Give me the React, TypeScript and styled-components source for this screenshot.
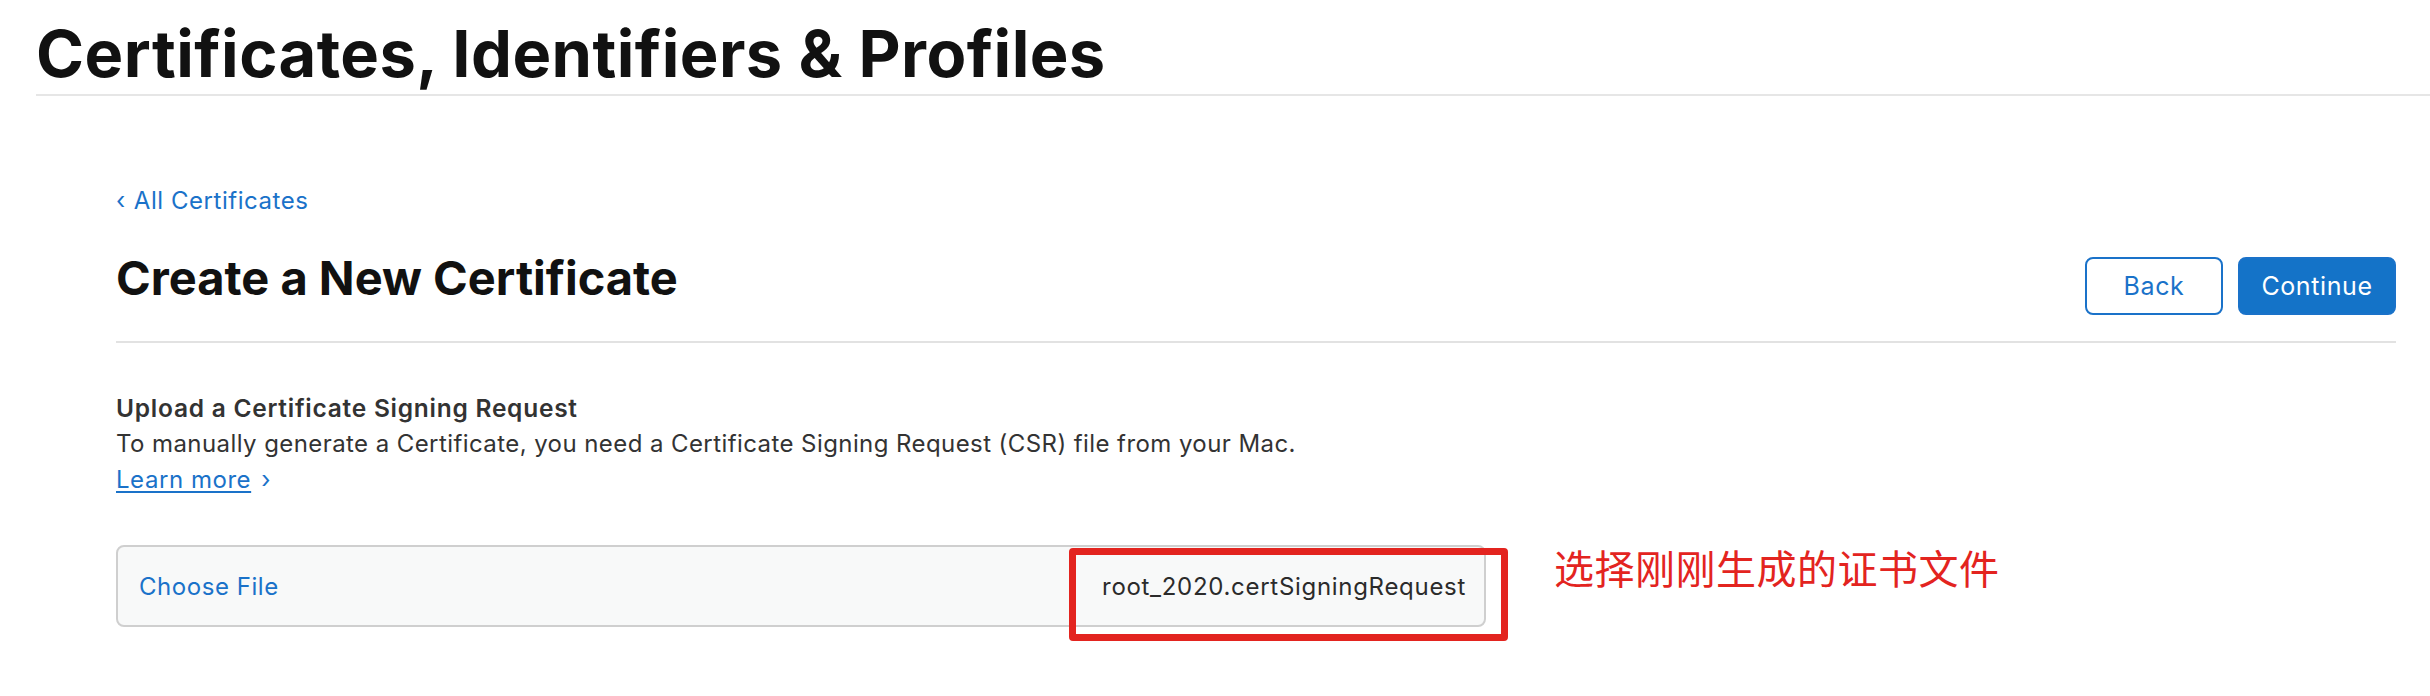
import React from "react";
import styled, { createGlobalStyle } from "styled-components";

const GlobalStyle = createGlobalStyle`
  html, body {
    margin: 0;
    padding: 0;
    background: #ffffff;
  }
  body {
    font-family: Inter, "Liberation Sans", "Noto Sans CJK SC", sans-serif;
    color: #111111;
  }
  * { box-sizing: border-box; }
`;

const Page = styled.div`
  width: 2430px;
  min-height: 696px;
  display: flex;
  flex-direction: column;
`;

const Header = styled.header`
  margin-left: 36px;
  padding-top: 21px;
  padding-bottom: 8px;
  border-bottom: 2px solid #e6e6e6;
`;

const SiteTitle = styled.h1`
  margin: 0;
  font-size: 65px;
  line-height: 65px;
  font-weight: 700;
  letter-spacing: 0.45px;
  color: #111111;
`;

const Main = styled.main`
  margin: 0 34px 0 116px;
  padding-top: 93px;
  display: flex;
  flex-direction: column;
`;

const BackLink = styled.a`
  font-size: 24px;
  line-height: 23px;
  letter-spacing: 0.55px;
  color: #1a72c9;
  text-decoration: none;
  display: flex;
  align-items: center;
  gap: 8px;
`;

const TitleRow = styled.div`
  margin-top: 42px;
  padding-bottom: 26px;
  border-bottom: 2px solid #e2e2e2;
  display: flex;
  justify-content: space-between;
  align-items: flex-start;
`;

const PageTitle = styled.h2`
  margin: 0;
  font-size: 47px;
  line-height: 47px;
  font-weight: 700;
  color: #111111;
`;

const Actions = styled.div`
  margin-top: 3px;
  display: flex;
  gap: 15px;
`;

const Button = styled.button<{ $primary?: boolean }>`
  height: 58px;
  padding: 0;
  width: ${(p) => (p.$primary ? "158px" : "138px")};
  border-radius: 8px;
  border: 2px solid #1a72c9;
  background: ${(p) => (p.$primary ? "#1473c8" : "#ffffff")};
  color: ${(p) => (p.$primary ? "#ffffff" : "#1a72c9")};
  font-family: Inter, "Liberation Sans", sans-serif;
  font-size: 25px;
  letter-spacing: 0.6px;
  font-weight: 400;
`;

const Section = styled.section`
  margin-top: 47px;
  display: flex;
  flex-direction: column;
  letter-spacing: 0.55px;
`;

const SectionTitle = styled.h3`
  margin: 0;
  font-size: 24.5px;
  line-height: 36px;
  font-weight: 600;
  letter-spacing: 0.75px;
  color: #333333;
`;

const Text = styled.p`
  margin: 0;
  font-size: 24px;
  line-height: 36px;
  letter-spacing: 0.42px;
  color: #333333;
`;

const LearnLine = styled.div`
  font-size: 24px;
  line-height: 36px;
  color: #1a72c9;
  display: flex;
  gap: 10px;
`;

const LearnMore = styled.a`
  color: #1a72c9;
  text-decoration: underline;
  text-decoration-thickness: 2px;
  text-underline-offset: 3px;
`;

const UploadRow = styled.div`
  margin-top: 47px;
  display: flex;
  align-items: flex-start;
`;

const FileField = styled.div`
  position: relative;
  width: 1370px;
  height: 82px;
  border: 2px solid #cfcfcf;
  border-radius: 8px;
  background: #f8f9f9;
  display: flex;
  align-items: center;
  justify-content: space-between;
  padding: 0 18px 0 21px;
  font-size: 24px;
`;

const ChooseFile = styled.span`
  color: #1a72c9;
`;

const FileName = styled.span`
  color: #2b2b2b;
  letter-spacing: 0.7px;
`;

const Highlight = styled.div`
  position: absolute;
  left: 951px;
  right: -24px;
  top: 1px;
  bottom: -16px;
  border: 7px solid #e3241f;
  border-radius: 4px;
  pointer-events: none;
`;

const Annotation = styled.div`
  margin-left: 68px;
  margin-top: 2px;
  font-family: "Noto Sans CJK SC", sans-serif;
  font-size: 40px;
  line-height: 40px;
  letter-spacing: 0.5px;
  color: #e3241f;
`;

export default function App() {
  return (
    <Page>
      <GlobalStyle />
      <Header>
        <SiteTitle>Certificates, Identifiers &amp; Profiles</SiteTitle>
      </Header>
      <Main>
        <BackLink href="#">
          <span>‹</span>
          <span>All Certificates</span>
        </BackLink>
        <TitleRow>
          <PageTitle>Create a New Certificate</PageTitle>
          <Actions>
            <Button>Back</Button>
            <Button $primary>Continue</Button>
          </Actions>
        </TitleRow>
        <Section>
          <SectionTitle>Upload a Certificate Signing Request</SectionTitle>
          <Text>
            To manually generate a Certificate, you need a Certificate Signing Request (CSR) file from your Mac.
          </Text>
          <LearnLine>
            <LearnMore href="#">Learn more</LearnMore>
            <span>›</span>
          </LearnLine>
          <UploadRow>
            <FileField>
              <ChooseFile>Choose File</ChooseFile>
              <FileName>root_2020.certSigningRequest</FileName>
              <Highlight />
            </FileField>
            <Annotation>选择刚刚生成的证书文件</Annotation>
          </UploadRow>
        </Section>
      </Main>
    </Page>
  );
}
